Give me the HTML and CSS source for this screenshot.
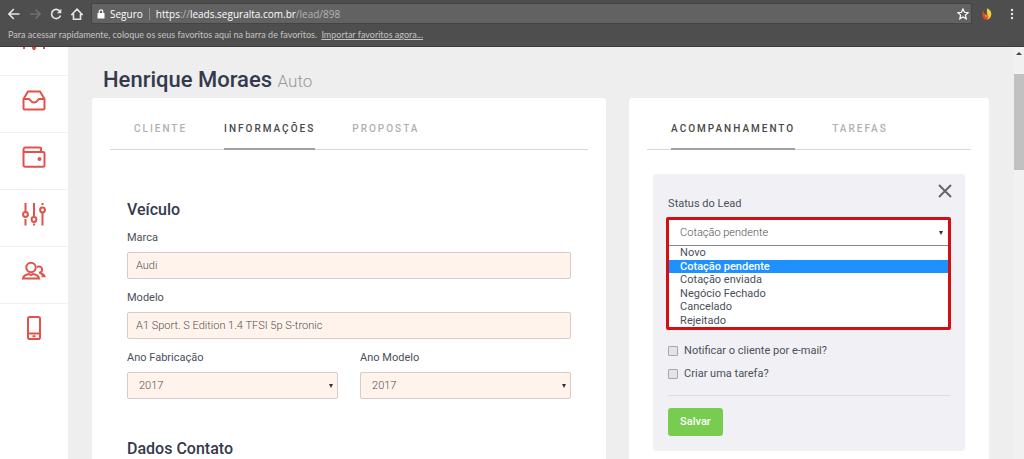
FILE: index.html
```html
<!DOCTYPE html>
<html lang="pt-BR">
<head>
<meta charset="utf-8">
<meta name="viewport" content="width=device-width, initial-scale=1">
<title>Henrique Moraes - Auto</title>
<link rel="stylesheet" href="styles.css">
</head>
<body>
<header class="chrome">
  <div class="toolbar">
    <div class="nav-buttons">
      <button class="tool" aria-label="Voltar"><svg viewBox="0 0 12 12"><path d="M11.5 6H1M5.800 1L.9 6l4.900 5"/></svg></button>
      <button class="tool tool-off" aria-label="Avançar" disabled><svg viewBox="0 0 12 12"><path d="M1 6h10M6.500 1.500L11 6l-4.500 4.500"/></svg></button>
      <button class="tool" aria-label="Recarregar"><svg viewBox="0 0 12 12"><path d="M9.900 3.300A4.600 4.600 0 1 0 10.500 7.500"/><path class="solid" d="M11.300.8v4.400H6.900z"/></svg></button>
      <button class="tool" aria-label="Página inicial"><svg viewBox="0 0 12 12"><path d="M.8 6.500L6 1.200l5.200 5.300H9.500v4.700h-7V6.500z"/></svg></button>
    </div>
    <div class="address">
      <svg class="lock" viewBox="0 0 8 10"><path class="solid" d="M.5 4h7v5.500h-7z"/><path d="M2.200 4.500V2.700a1.800 1.800 0 0 1 3.600 0v1.800"/></svg>
      <span class="secure">Seguro</span>
      <span class="url">https<span class="dim">://</span>leads.seguralta.com.br<span class="dim">/lead/898</span></span>
      <button class="tool star" aria-label="Adicionar aos favoritos"><svg viewBox="0 0 12 12"><path d="M6 1l1.500 3.300 3.600.4-2.700 2.400.8 3.600L6 8.900l-3.200 1.800.8-3.600L.9 4.700l3.600-.4z"/></svg></button>
    </div>
    <button class="tool flame" aria-label="Extensão"><svg viewBox="0 0 10 12"><path fill="#e7432d" d="M1.300 2.500C-.8 7 .4 11.500 4.800 11.700 8 11.500 9 9 8.300 6L5 8 3 7z"/><path fill="#f0d53a" d="M4.800.3c3.800 1.200 5.400 4.800 4.100 8-.8 2-2.300 3-4 3.300 1.700-1.500 1.900-2.600 1-4.200C4.200 5 5.400 3.300 4.800.3z"/><path fill="#f48a24" d="M3 5.500c-.8 2.300.3 3.700 2 4 1-1 .8-2 0-3L4 7.300z"/></svg></button>
    <button class="tool dots" aria-label="Menu"><svg viewBox="0 0 4 12"><circle cx="2" cy="2" r="1.200"/><circle cx="2" cy="6" r="1.200"/><circle cx="2" cy="10" r="1.200"/></svg></button>
  </div>
  <div class="bookmarks">Para acessar rapidamente, coloque os seus favoritos aqui na barra de favoritos. <a href="#">Importar favoritos agora...</a></div>
</header>

<div class="page">
  <nav class="sidebar" aria-label="Principal">
    <a class="side-item" href="#" aria-label="Indicadores"><svg viewBox="0 0 24 24"><path d="M2 3v20M12 3v21M22 3v20"/><circle class="solid" cx="12" cy="21.500" r="1.200"/></svg></a>
    <a class="side-item" href="#" aria-label="Caixa de entrada"><svg viewBox="0 0 24 24"><path d="M1.500 11L6 3.500h12l4.500 7.500v9a1.500 1.500 0 0 1-1.500 1.500H3A1.500 1.500 0 0 1 1.500 20zM1.500 11H7c1 0 1.500 3.500 5 3.500s4-3.500 5-3.500h5.500"/></svg></a>
    <a class="side-item" href="#" aria-label="Carteira"><svg viewBox="0 0 24 24"><path d="M19 7V3.500A1 1 0 0 0 18 2.500H3.500A2 2 0 0 0 1.500 4.500V20A1.700 1.700 0 0 0 3.200 21.700H21a1.500 1.500 0 0 0 1.500-1.500V8.500A1.500 1.500 0 0 0 21 7H3.500A2 2 0 0 1 1.500 5"/><circle class="solid" cx="17.500" cy="14" r="1"/></svg></a>
    <a class="side-item" href="#" aria-label="Ajustes"><svg viewBox="0 0 24 24"><path d="M3.500 1v8.500M3.500 17v6.500M12 1v13M12 21.500v2M20.500 1v2M20.500 11v12.500"/><circle cx="3.500" cy="12.500" r="2.400"/><circle cx="12" cy="17.500" r="2.400"/><circle cx="20.500" cy="8" r="2.400"/></svg></a>
    <a class="side-item" href="#" aria-label="Clientes"><svg viewBox="0 0 24 24"><circle cx="9" cy="8.500" r="4.700"/><path d="M1 19.500c.5-3 2.500-4 6-4.500l2 1.200 2-1.200c3.500.5 5.500 1.500 6 4.500zM15 8c3-1.500 5.500.5 5 3.500-.3 1.500-1.500 2.200-3 2.200M18.500 14.500c2.500.5 3.500 1.200 4 2.800h-3"/></svg></a>
    <a class="side-item" href="#" aria-label="Celular"><svg viewBox="0 0 24 24"><rect x="6" y="1" width="12" height="22" rx="1.800"/><path d="M6 17.500h12M10.500 20.300h3"/></svg></a>
  </nav>

  <main class="content">
    <h1 class="title">Henrique Moraes <small>Auto</small></h1>
    <div class="columns">
      <section class="card">
        <div class="tabs" role="tablist">
          <button class="tab" role="tab">CLIENTE</button>
          <button class="tab active" role="tab" aria-selected="true">INFORMAÇÕES</button>
          <button class="tab" role="tab">PROPOSTA</button>
        </div>
        <form class="form">
          <h2>Veículo</h2>
          <div class="field"><label for="marca">Marca</label><input class="control" id="marca" type="text" value="Audi"></div>
          <div class="field"><label for="modelo">Modelo</label><input class="control" id="modelo" type="text" value="A1 Sport. S Edition 1.4 TFSI 5p S-tronic"></div>
          <div class="pair">
            <div class="field"><label for="fab">Ano Fabricação</label><div class="picker"><select class="control" id="fab"><option>2017</option></select></div></div>
            <div class="field"><label for="ano">Ano Modelo</label><div class="picker"><select class="control" id="ano"><option>2017</option></select></div></div>
          </div>
          <h2 class="next">Dados Contato</h2>
        </form>
      </section>

      <section class="card">
        <div class="tabs" role="tablist">
          <button class="tab active" role="tab" aria-selected="true">ACOMPANHAMENTO</button>
          <button class="tab" role="tab">TAREFAS</button>
        </div>
        <form class="panel">
          <div class="panel-head">
            <label for="status">Status do Lead</label>
            <button type="button" class="close" aria-label="Fechar"><svg viewBox="0 0 14 14"><path d="M1 1l12 12M13 1L1 13"/></svg></button>
          </div>
          <div class="status">
            <div class="picker"><select class="status-select" id="status"><option>Cotação pendente</option></select></div>
            <ul class="options" role="listbox" aria-label="Status do Lead">
              <li role="option">Novo</li>
              <li role="option" class="chosen" aria-selected="true">Cotação pendente</li>
              <li role="option">Cotação enviada</li>
              <li role="option">Negócio Fechado</li>
              <li role="option">Cancelado</li>
              <li role="option">Rejeitado</li>
            </ul>
          </div>
          <div class="checks">
            <label class="check"><input type="checkbox">Notificar o cliente por e-mail?</label>
            <label class="check"><input type="checkbox">Criar uma tarefa?</label>
          </div>
          <div class="actions"><button type="button" class="save">Salvar</button></div>
        </form>
      </section>
    </div>
  </main>
  <div class="scrollbar"><span class="arrow"></span><span class="thumb"></span></div>
</div>
</body>
</html>
```
FILE: styles.css
```css
* { box-sizing: border-box; }
body {
  margin: 0;
  height: 100vh;
  display: flex;
  flex-direction: column;
  overflow: hidden;
  background: #eeeeee;
  color: #4a4f5a;
  font: 11px/16px Roboto, "Liberation Sans", sans-serif;
}
button, input, select { font: inherit; color: inherit; margin: 0; }
button { border: 0; padding: 0; background: none; }
h1, h2, ul { margin: 0; padding: 0; }
svg { display: block; fill: none; stroke: currentColor; }

/* Browser frame */
.chrome {
  flex: none;
  height: 47px;
  padding: 3px 0 0;
  background: #4e4e4e;
  border-bottom: 1px solid #3c3c3c;
  color: #e6e6e6;
  font-family: "Open Sans", "Noto Sans", sans-serif;
}
.toolbar { display: flex; align-items: center; padding-right: 10px; }
.nav-buttons { display: flex; gap: 9px; padding: 0 8px; width: 91px; }
.tool svg { width: 12px; height: 12px; stroke-width: 1.6; }
.tool .solid, .lock .solid { fill: currentColor; stroke: none; }
.tool-off { color: #707070; }
.address {
  flex: 1;
  display: flex;
  align-items: center;
  height: 21px;
  padding: 0 2px 0 5px;
  background: #626262;
  border: 1px solid #444444;
  border-radius: 2px;
  color: #ffffff;
}
.lock { width: 8px; height: 10px; stroke-width: 1.2; }
.secure { margin-left: 5px; padding-right: 6px; border-right: 1px solid #8c8c8c; line-height: 12px; font-size: 10px; }
.url { flex: 1; padding-left: 6px; font-size: 10px; }
.dim { color: #b4b4b4; }
.star svg { stroke-width: 1.2; }
.flame { margin-left: 10px; }
.flame svg { width: 10px; stroke: none; }
.dots { margin-left: 18px; }
.dots svg { width: 4px; fill: currentColor; stroke: none; }
.bookmarks { padding: 3px 8px; color: #c4c4c4; font-family: Lato, "Open Sans", sans-serif; font-size: 9px; }
.bookmarks a { color: inherit; margin-left: 2px; }

.page { flex: 1; min-height: 0; display: flex; overflow: hidden; }

/* Sidebar, scrolled part of the way through its first item */
.sidebar { flex: none; width: 68px; background: #ffffff; }
.side-item {
  display: flex;
  justify-content: center;
  height: 57px;
  padding-top: 12px;
  border-bottom: 1px solid #f0f0f0;
  color: #e0524a;
}
.side-item:first-child { margin-top: -28px; padding-top: 7px; }
.side-item:last-child { border-bottom: 0; }
.side-item svg { width: 24px; height: 24px; stroke-width: 2; }
.side-item .solid { fill: currentColor; }

/* Content */
.content { flex: 1; min-width: 0; padding: 19px 25px 0 24px; }
.title { padding-left: 11px; font-size: 22px; line-height: 28px; font-weight: 500; color: #343a4c; }
.title small { font-size: 17px; font-weight: 300; color: #999999; }
.columns { display: grid; grid-template-columns: 10fr 7fr; gap: 23px; margin-top: 3px; }
.card { min-height: 400px; padding: 16px 18px; background: #ffffff; border-radius: 3px; }
.tabs { display: flex; gap: 37px; padding: 0 24px; border-bottom: 1px solid #d8d8d8; }
.tab {
  height: 36px;
  margin-bottom: -1px;
  padding-bottom: 5px;
  border-bottom: 2px solid transparent;
  color: #b0b0b0;
  font-size: 10px;
  font-weight: 500;
  letter-spacing: 2px;
}
.tab.active { color: #484848; border-color: #a0a0a0; }
.form { padding: 49px 17px 0; }
.form h2 { margin-bottom: 9px; font-size: 16px; line-height: 22px; font-weight: 500; color: #343a4c; }
.form .next { margin-top: 28px; }
.field { margin-bottom: 11px; }
.field label { display: block; margin-bottom: 6px; }
.control {
  display: block;
  width: 100%;
  height: 27px;
  padding: 0 8px;
  border: 1px solid #d4ccca;
  border-radius: 2px;
  background: #fff3ec;
  color: #505050;
  font-weight: 300;
}
.pair { display: grid; grid-template-columns: 1fr 1fr; gap: 22px; }
.picker { display: grid; align-items: center; }
.picker select { grid-area: 1 / 1; appearance: none; }
.picker::after {
  content: "";
  grid-area: 1 / 1;
  justify-self: end;
  margin-right: 5px;
  border: 2px solid transparent;
  border-top: 4px solid #333333;
  border-bottom: 0;
  pointer-events: none;
}
.picker .control { padding: 0 11px; }

/* Status panel */
.panel { margin: 24px 6px 0; padding: 10px 15px 15px; background: #f1f1f5; border-radius: 4px; }
.panel-head { display: flex; justify-content: space-between; height: 33px; }
.panel-head label { align-self: flex-end; margin-bottom: 5px; }
.close { align-self: flex-start; margin-right: -2px; color: #666666; }
.close svg { width: 14px; height: 14px; stroke-width: 2; }
.status { margin: 0 -1px 0 -2px; border: 3px solid #d40f14; border-radius: 2px; background: #ffffff; }
.status-select {
  width: 100%;
  height: 26px;
  padding: 0 11px;
  border: 0;
  border-bottom: 1px solid #85859a;
  background: #ffffff;
  color: #505050;
  font-weight: 300;
}
.options { display: grid; grid-template-rows: repeat(6, 1fr); height: 81px; list-style: none; }
.options li { display: flex; align-items: center; padding-left: 11px; line-height: 13px; }
.options .chosen { background: #1e90ff; color: #ffffff; font-weight: 500; }
.checks { display: grid; gap: 7px; padding: 13px 0; border-bottom: 1px solid #dcdce2; }
.check { display: flex; align-items: center; gap: 6px; }
.check input {
  appearance: none;
  width: 10px;
  height: 10px;
  border: 1px solid #a8a8a8;
  border-radius: 1px;
  background: #e4e4e4;
}
.actions { padding-top: 12px; }
.save { height: 28px; padding: 0 12px; border-radius: 3px; background: #78cc50; color: #ffffff; font-weight: 500; }

/* Scrollbar */
.scrollbar { flex: none; width: 10px; display: flex; flex-direction: column; align-items: center; background: #f1f1f1; }
.arrow { margin: 5px 0 19px; border: 3px solid transparent; border-bottom: 3px solid #444444; border-top: 0; }
.thumb { width: 10px; height: 96px; background: #c1c1c1; }
```
